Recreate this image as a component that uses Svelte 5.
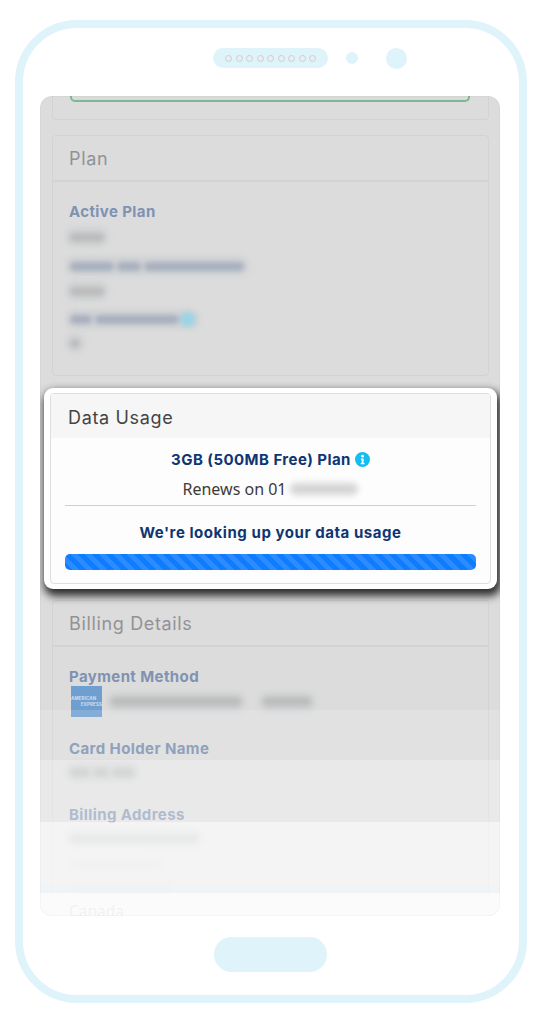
<script>
  const speakerDots = [1, 2, 3, 4, 5, 6, 7, 8, 9];
  const planLines = [
    { segs: [34], mt: 7, tone: 'grey' },
    { segs: [44, 24, 100], mt: 11, tone: 'slate' },
    { segs: [34], mt: 7, tone: 'grey' },
    { segs: [22, 84], mt: 10, tone: 'slate', info: true },
    { segs: [10], mt: 6, tone: 'grey' }
  ];
  const bands = [
    { h: 50, c: 'rgba(255,255,255,0.14)' },
    { h: 62, c: 'rgba(255,255,255,0.38)' },
    { h: 63, c: 'rgba(255,255,255,0.68)' },
    { h: 8, c: 'rgba(246,251,254,0.78)' },
    { h: 23, c: 'rgba(255,255,255,0.88)' }
  ];
</script>

<div class="phone">
  <div class="top">
    <div class="speaker">
      {#each speakerDots as d (d)}<i></i>{/each}
    </div>
    <div class="dot"></div>
    <div class="cam"></div>
  </div>

  <div class="screen">
    <div class="content">
      <section class="card first"><div class="green"></div></section>

      <section class="card plan">
        <h2>Plan</h2>
        <div class="body">
          <h3>Active Plan</h3>
          {#each planLines as l}
            <div class="blur-row" style="margin-top:{l.mt}px">
              <span class="smear">
                {#each l.segs as w}
                  <span class="core {l.tone}" style="width:{w}px"></span>
                {/each}
                {#if l.info}<span class="blur-info"></span>{/if}
              </span>
            </div>
          {/each}
        </div>
      </section>

      <section class="card billing">
        <h2>Billing Details</h2>
        <div class="body">
          <h3>Payment Method</h3>
          <div class="pay">
            <div class="amex"><span>AMERICAN</span><span class="ex">EXPRESS</span></div>
            <span class="smear"><span class="core grey" style="width:130px"></span></span>
            <span class="smear gapped"><span class="core grey" style="width:48px"></span></span>
          </div>
          <h3 class="holder">Card Holder Name</h3>
          <div class="blur-row tight">
            <span class="smear">
              <span class="core grey" style="width:20px"></span>
              <span class="core grey" style="width:16px"></span>
              <span class="core grey" style="width:22px"></span>
            </span>
          </div>
          <h3 class="address">Billing Address</h3>
          <div class="blur-row tight">
            <span class="smear"><span class="core grey" style="width:128px"></span></span>
          </div>
          <div class="blur-row faint"><span class="smear"><span class="core grey" style="width:90px"></span></span></div>
          <div class="blur-row faint"><span class="smear"><span class="core grey" style="width:104px"></span></span></div>
          <p class="country">Canada</p>
        </div>
      </section>
    </div>

    <div class="fade">
      {#each bands as b}
        <div style="height:{b.h}px;background:{b.c}"></div>
      {/each}
    </div>

    <div class="highlight">
      <div class="usage">
        <h2>Data Usage</h2>
        <div class="usage-body">
          <div class="plan-name">
            <span>3GB (500MB Free) Plan</span>
            <svg viewBox="0 0 16 16" width="15" height="15" aria-hidden="true">
              <circle cx="8" cy="8" r="8" fill="#14bdef" />
              <circle cx="8" cy="4.4" r="1.5" fill="#fff" />
              <path d="M6.3 7h2.9v4.7h1v1.3H6.1v-1.3h1V8.3H6.3z" fill="#fff" />
            </svg>
          </div>
          <div class="renews">
            <span>Renews on 01</span>
            <span class="date-blur"></span>
          </div>
          <hr />
          <div class="lookup">We're looking up your data usage</div>
          <div class="progress"></div>
        </div>
      </div>
    </div>
  </div>

  <div class="home"></div>
</div>

<style>
  :global(body) {
    margin: 0;
    background: #fff;
  }
  .phone {
    box-sizing: border-box;
    width: 512px;
    height: 983px;
    margin: 20px 0 0 15px;
    border: 8px solid #dff3fb;
    border-radius: 62px;
    background: #fff;
    font-family: Inter, "Liberation Sans", sans-serif;
  }
  .top {
    display: flex;
    align-items: center;
    height: 68px;
    padding: 0 0 8px 190px;
    box-sizing: border-box;
  }
  .speaker {
    display: flex;
    align-items: center;
    justify-content: center;
    gap: 3.5px;
    width: 115px;
    height: 20px;
    border-radius: 10px;
    background: #dff3fb;
  }
  .speaker i {
    box-sizing: border-box;
    width: 7px;
    height: 7px;
    border-radius: 50%;
    background: #e9eef0;
    border: 1.5px solid #c9cfd2;
  }
  .dot {
    width: 12px;
    height: 12px;
    margin-left: 18px;
    border-radius: 50%;
    background: #dff3fb;
  }
  .cam {
    width: 21px;
    height: 21px;
    margin-left: 28px;
    border-radius: 50%;
    background: #dff3fb;
  }
  .screen {
    position: relative;
    width: 460px;
    height: 820px;
    margin-left: 17px;
    overflow: hidden;
    border-radius: 12px;
    background: #dcdcdc;
  }
  .screen::after {
    content: "";
    position: absolute;
    inset: 0;
    border: 1px solid rgba(0, 0, 0, 0.025);
    border-radius: 12px;
    pointer-events: none;
  }
  .content {
    display: flex;
    flex-direction: column;
    padding: 0 11px 0 12px;
    color: #929296;
  }
  .card {
    box-sizing: border-box;
    flex: none;
    border: 1px solid #d3d3d3;
    border-radius: 4px;
  }
  .first {
    height: 24px;
    padding: 0 18px 0 17px;
    border-top: 0;
    border-radius: 0 0 4px 4px;
  }
  .green {
    height: 4px;
    border: 2px solid #7db896;
    border-top: 0;
    border-radius: 0 0 5px 5px;
    background: #d9dbd8;
  }
  .plan {
    height: 241px;
    margin-top: 15px;
  }
  .billing {
    height: 330px;
    margin-top: 224px;
    border-bottom: 0;
  }
  h2 {
    margin: 0;
    height: 44px;
    line-height: 46px;
    padding-left: 16px;
    font-size: 18px;
    font-weight: 400;
    letter-spacing: 0.65px;
    border-bottom: 2px solid #d3d3d3;
    box-sizing: content-box;
  }
  .body {
    padding: 21px 16px 0;
  }
  h3 {
    margin: 0;
    font-size: 15px;
    line-height: 18px;
    font-weight: 700;
    letter-spacing: 0.4px;
    color: #7f92b2;
  }
  .blur-row {
    display: flex;
    align-items: center;
    height: 18px;
  }
  .smear {
    display: inline-flex;
    align-items: center;
    gap: 3px;
    height: 20px;
    margin-left: -4px;
    padding: 0 5px;
    border-radius: 10px;
    background: #d0d2d4;
    filter: blur(2.5px);
  }
  .core {
    display: block;
    height: 9px;
    border-radius: 5px;
  }
  .grey {
    background: #bcbcbc;
  }
  .slate {
    background: #a8b0be;
  }
  .gapped {
    margin-left: 12px;
  }
  .blur-info {
    display: block;
    width: 15px;
    height: 15px;
    margin-left: -2px;
    border-radius: 50%;
    background: #9ad4e4;
  }
  .pay {
    display: flex;
    align-items: center;
    padding-left: 2px;
  }
  .amex {
    display: flex;
    flex-direction: column;
    justify-content: center;
    flex: none;
    width: 31px;
    height: 31px;
    margin-right: 8px;
    background: #6f9fd0;
    color: #cfdeee;
    font-size: 4.5px;
    line-height: 6px;
    font-weight: 700;
    letter-spacing: 0.1px;
    white-space: nowrap;
    overflow: hidden;
  }
  .ex {
    text-align: right;
  }
  .holder {
    margin-top: 23px;
  }
  .address {
    margin-top: 25px;
  }
  .tight {
    margin-top: 5px;
  }
  .faint {
    margin-top: 8px;
    opacity: 0.22;
  }
  .country {
    margin: 2px 0 0;
    font-size: 15.5px;
    line-height: 20px;
    font-family: "Noto Sans", sans-serif;
    color: #8f8f93;
  }
  .fade {
    position: absolute;
    left: 0;
    right: 0;
    bottom: 0;
    display: flex;
    flex-direction: column;
  }
  .highlight {
    position: absolute;
    z-index: 1;
    left: 4px;
    top: 292px;
    box-sizing: border-box;
    width: 453px;
    height: 201px;
    padding: 5px 6px;
    background: #fff;
    border-radius: 9px;
    box-shadow: 2px 5px 8px 2px rgba(0, 0, 0, 0.8);
  }
  .usage {
    box-sizing: border-box;
    height: 191px;
    border: 1px solid #dedede;
    border-radius: 4px;
    background: #fdfdfd;
    overflow: hidden;
  }
  .usage h2 {
    height: 44px;
    line-height: 47px;
    padding-left: 17px;
    color: #444;
    background: #f6f6f6;
    border-bottom: 0;
  }
  .usage-body {
    padding: 11px 14px 0;
    text-align: center;
  }
  .plan-name {
    display: flex;
    align-items: center;
    justify-content: center;
    gap: 4px;
    height: 20px;
    font-size: 15px;
    font-weight: 700;
    letter-spacing: 0.45px;
    color: #0f3572;
  }
  .renews {
    display: flex;
    align-items: center;
    justify-content: center;
    gap: 3px;
    height: 20px;
    margin-top: 10px;
    padding-right: 1px;
    font-family: "Noto Sans", sans-serif;
    font-size: 16px;
    color: #3b3b3b;
  }
  .date-blur {
    display: block;
    width: 68px;
    height: 12px;
    border-radius: 6px;
    background: #d4d4d4;
    filter: blur(3px);
  }
  hr {
    margin: 6px 0 0;
    border: 0;
    border-top: 1px solid #c9d0da;
  }
  .lookup {
    height: 20px;
    margin-top: 17px;
    font-size: 15px;
    line-height: 20px;
    font-weight: 700;
    letter-spacing: 0.55px;
    color: #0f3572;
  }
  .progress {
    height: 16px;
    margin-top: 11px;
    border-radius: 5px;
    background: repeating-linear-gradient(45deg, #0f7bff 0 5px, #2b8cff 5px 10px);
  }
  .home {
    width: 113px;
    height: 35px;
    margin: 21px 0 0 191px;
    border-radius: 18px;
    background: #dff3fb;
  }
</style>
